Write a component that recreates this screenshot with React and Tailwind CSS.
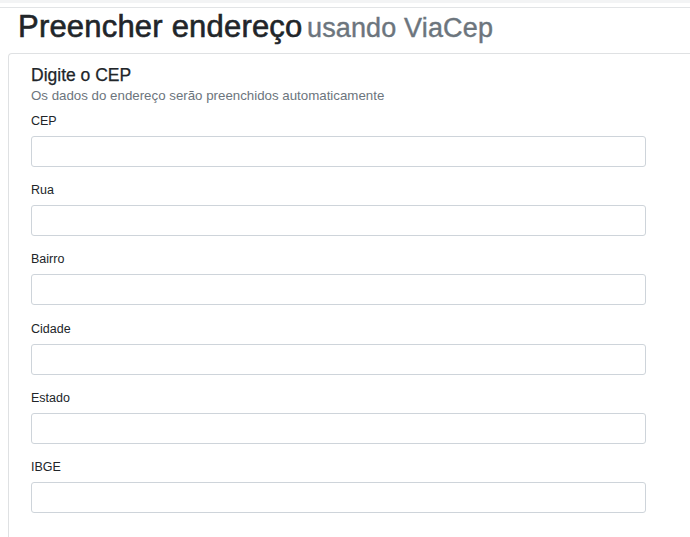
import React from "react";

const fields = ["CEP", "Rua", "Bairro", "Cidade", "Estado", "IBGE"];

export default function App() {
  return (
    <div
      className="w-[690px] h-[537px] overflow-hidden bg-white flex flex-col text-[#212529]"
      style={{ fontFamily: '"Liberation Sans", Arial, sans-serif' }}
    >
      <div className="h-[3px] bg-[#f3f4f5] shrink-0" />
      <div className="h-[4px] shrink-0" />
      <div className="h-px bg-[#e2e4e6] shrink-0" />
      <div className="h-[37px] leading-[37px] pl-[18px] whitespace-nowrap shrink-0">
        <span className="text-[31px] tracking-[0.2px] [-webkit-text-stroke:0.6px_#212529]">Preencher endereço</span>{" "}
        <span className="text-[27px] text-[#6c757d] tracking-[0.15px] [-webkit-text-stroke:0.4px_#6c757d]">usando ViaCep</span>
      </div>
      <div className="mt-[8px] ml-[8px] mr-[-20px] flex-1 border-l border-t border-[#dfe1e3] rounded-tl-[4px] pl-[22px] pt-[11px]">
        <div className="text-[17.5px] leading-[21px] text-[#212529] [-webkit-text-stroke:0.25px_#212529]">Digite o CEP</div>
        <div className="mt-[2px] text-[13.3px] leading-[16px] text-[#6c757d]">
          Os dados do endereço serão preenchidos automaticamente
        </div>
        <div className="mt-[8px]">
          {fields.map((f) => (
            <div key={f} className="mb-[14.2px]">
              <label className="block text-[12.5px] leading-[18px] mb-[6px] text-[#212529]">{f}</label>
              <input
                type="text"
                className="block w-[615px] h-[31px] border border-[#ced4da] rounded-[3px] bg-white outline-none"
              />
            </div>
          ))}
        </div>
      </div>
    </div>
  );
}
